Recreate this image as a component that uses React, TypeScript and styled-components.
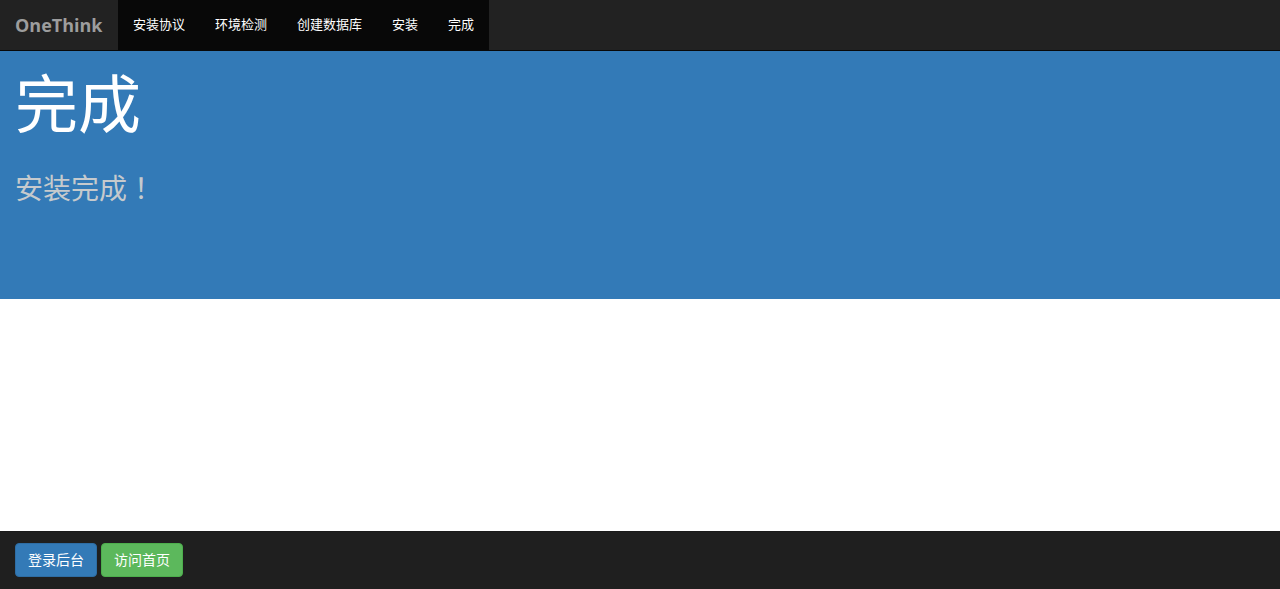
import styled, { createGlobalStyle } from 'styled-components';

const GlobalStyle = createGlobalStyle`
  html, body {
    margin: 0;
    padding: 0;
    background: #ffffff;
    font-family: "Liberation Sans", "Noto Sans CJK SC", sans-serif;
    font-size: 14px;
    color: #333;
  }
  * { box-sizing: border-box; }
`;

const Page = styled.div`
  min-height: 589px;
  display: flex;
  flex-direction: column;
`;

const Navbar = styled.nav`
  display: flex;
  height: 51px;
  background: #222222;
  border-bottom: 1px solid #080808;
`;

const Brand = styled.a`
  display: block;
  width: 118px;
  padding: 0 15px;
  line-height: 50px;
  font-family: "Open Sans", "Liberation Sans", sans-serif;
  font-size: 18px;
  font-weight: 700;
  color: #9d9d9d;
  text-decoration: none;
  white-space: nowrap;
`;

const NavList = styled.ul`
  display: flex;
  margin: 0;
  padding: 0;
  list-style: none;
  background: #080808;
`;

const NavItem = styled.li`
  padding: 0 15px;
  line-height: 50px;
  font-size: 13px;
  color: #ffffff;
`;

const Jumbotron = styled.section`
  background: #337ab7;
  color: #ffffff;
  height: 248px;
  padding: 14px 15px 0;
`;

const Title = styled.h1`
  margin: 0;
  font-family: "Noto Sans CJK SC", sans-serif;
  font-size: 63px;
  font-weight: 400;
  line-height: 1.1;
`;

const Lead = styled.p`
  margin: 34px 0 0;
  font-family: "Noto Sans CJK SC", sans-serif;
  font-size: 28px;
  line-height: 1.4;
  color: #c6cacd;
`;

/* fullwidth exclamation mark drawn centred in its em box, as in the reference */
const Bang = styled.span`
  font-family: "Noto Sans CJK TC", sans-serif;
`;

const Main = styled.main`
  flex: 1;
`;

const Footer = styled.footer`
  display: flex;
  gap: 4px;
  height: 58px;
  padding: 11px 15px;
  background: #1f1f1f;
  border-top: 1px solid #1a1a1a;
  align-items: flex-start;
`;

const Button = styled.a<{ $tone: 'primary' | 'success' }>`
  display: inline-block;
  height: 34px;
  padding: 0 12px;
  line-height: 32px;
  font-size: 14px;
  color: #ffffff;
  text-decoration: none;
  border-radius: 4px;
  border: 1px solid ${(p) => (p.$tone === 'primary' ? '#2e6da4' : '#4cae4c')};
  background: ${(p) => (p.$tone === 'primary' ? '#337ab7' : '#5cb85c')};
`;

const steps = ['安装协议', '环境检测', '创建数据库', '安装', '完成'];

export default function App() {
  return (
    <Page>
      <GlobalStyle />
      <Navbar>
        <Brand href="#">OneThink</Brand>
        <NavList>
          {steps.map((s) => (
            <NavItem key={s}>{s}</NavItem>
          ))}
        </NavList>
      </Navbar>
      <Jumbotron>
        <Title>完成</Title>
        <Lead>
          安装完成<Bang>！</Bang>
        </Lead>
      </Jumbotron>
      <Main />
      <Footer>
        <Button $tone="primary" href="#">登录后台</Button>
        <Button $tone="success" href="#">访问首页</Button>
      </Footer>
    </Page>
  );
}
